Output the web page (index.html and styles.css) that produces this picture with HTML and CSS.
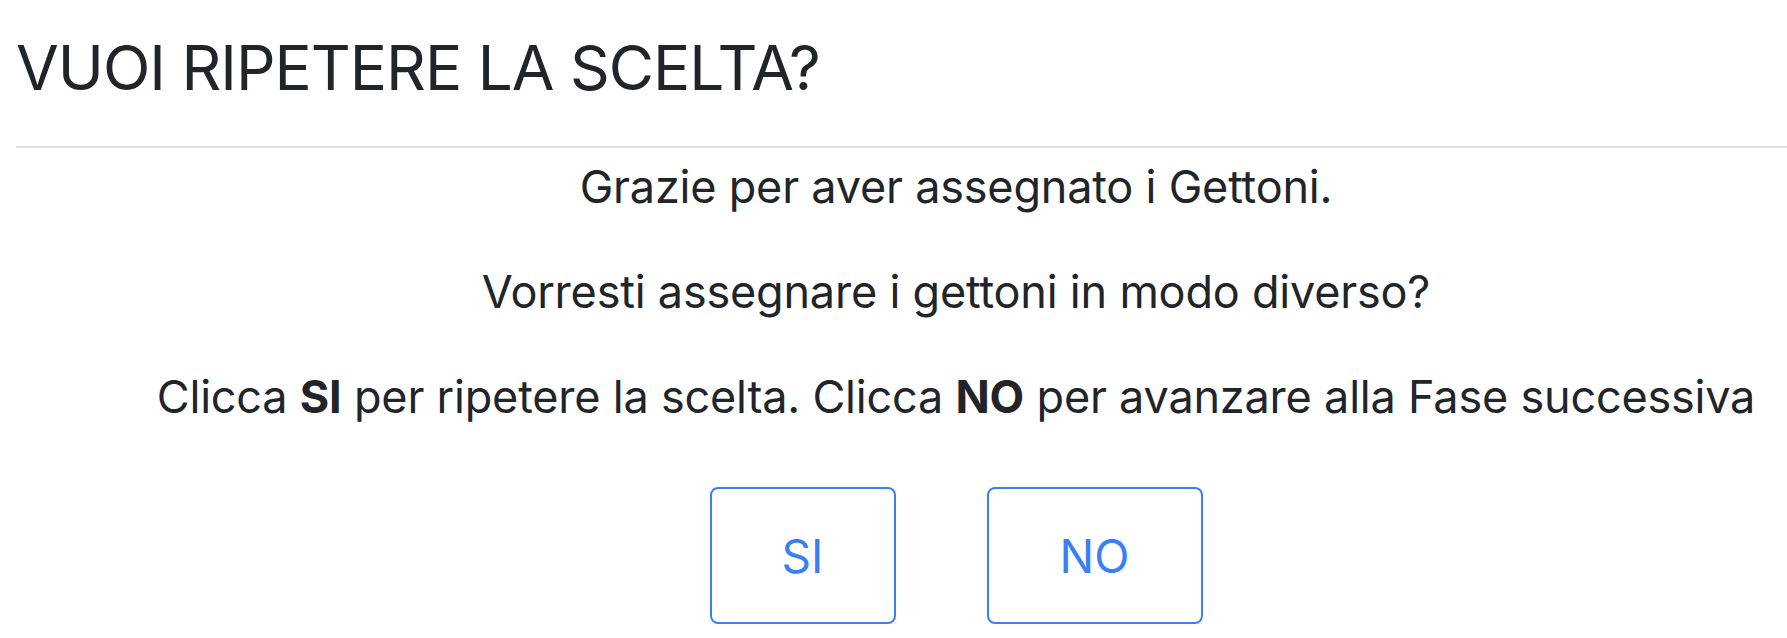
FILE: index.html
```html
<!DOCTYPE html>
<html lang="it">
<head>
<meta charset="utf-8">
<title>Vuoi ripetere la scelta?</title>
<link rel="stylesheet" href="styles.css">
</head>
<body>
<header class="page-header">
  <h1 class="title">VUOI RIPETERE LA SCELTA?</h1>
</header>
<main class="content">
  <p class="line">Grazie per aver assegnato i Gettoni.</p>
  <p class="line">Vorresti assegnare i gettoni in modo diverso?</p>
  <p class="line">Clicca <b>SI</b> per ripetere la scelta. Clicca <b>NO</b> per avanzare alla Fase successiva</p>
  <div class="actions">
    <button class="btn btn-si" type="button">SI</button>
    <button class="btn btn-no" type="button">NO</button>
  </div>
</main>
</body>
</html>
```
FILE: styles.css
```css
html, body {
  margin: 0;
  padding: 0;
  background: #ffffff;
}
body {
  font-family: Inter, "Liberation Sans", Arial, sans-serif;
  color: #212529;
}
.page-header {
  margin-left: 16px;
  padding-top: 31px;
  padding-bottom: 41px;
  border-bottom: 2px solid #dee2e6;
}
.title {
  margin: 0;
  font-size: 62px;
  line-height: 74px;
  font-weight: 400;
  letter-spacing: -1px;
}
.content {
  display: flex;
  flex-direction: column;
  align-items: center;
  padding-left: 125px;
  padding-top: 5px;
}
.line {
  margin: 0 0 37.5px 0;
  font-size: 45px;
  line-height: 67.5px;
  white-space: nowrap;
  letter-spacing: -0.2px;
}
.line b {
  font-weight: 700;
}
.actions {
  display: flex;
  gap: 91px;
  margin-top: 19px;
}
.btn {
  height: 137px;
  border: 2px solid #3a80f4;
  border-radius: 8px;
  background: #ffffff;
  color: #3a80f4;
  font-family: Inter, "Liberation Sans", Arial, sans-serif;
  font-size: 46px;
  font-weight: 400;
  padding: 0;
}
.btn-si { width: 186px; }
.btn-no { width: 216px; }
```
